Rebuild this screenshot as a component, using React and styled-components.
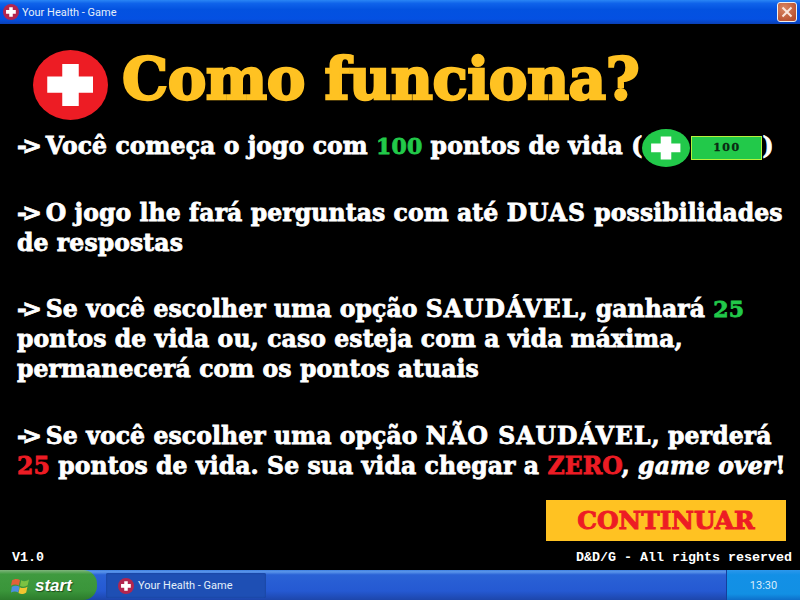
import React from 'react'
import styled, { createGlobalStyle } from 'styled-components'

const GlobalStyle = createGlobalStyle`
    html, body {
        margin: 0;
        padding: 0;
        background: #000;
    }
`

const Cross = ({ width, height, bg }) => (
    <svg width={width} height={height} viewBox="0 0 100 100" preserveAspectRatio="none" style={{ display: 'block', flexShrink: 0 }}>
        <ellipse cx="50" cy="50" rx="50" ry="50" fill={bg} />
        <path d="M39 20h22v18h19v23H61v19H39V61H19V38h20z" fill="#fff" />
    </svg>
)

const XpFlag = () => (
    <svg width="20" height="19" viewBox="0 0 20 19">
        <path d="M1 4.500C3.500 2.500 6.500 2.500 9 4l-1.200 5.600C5.300 8.200 2.700 8.200 0 9.800z" fill="#e2603a" />
        <path d="M10.200 4.200C12.500 5.700 15 5.600 18 3.500l-1.300 5.800c-2.700 1.800-5.300 1.800-7.700 .5z" fill="#7cc242" />
        <path d="M.8 10.800C3.500 9.300 6.200 9.300 8.500 10.800L7.300 16.500C5 15 2.500 15 0 16.600z" fill="#4c8fe0" />
        <path d="M8.800 11.200c2.400 1.300 5 1.300 7.700-.5L15.200 16.500c-2.800 1.900-5.400 1.900-7.700.5z" fill="#f2c530" />
    </svg>
)

const App = () => (
    <Desktop>
        <GlobalStyle />
        <TitleBar>
            <Cross width={16} height={16} bg="#b3264f" />
            <TitleText>Your Health - Game</TitleText>
            <CloseButton>
                <svg width="12" height="12" viewBox="0 0 12 12">
                    <path d="M1.500 1.500l9 9M10.500 1.500l-9 9" stroke="#fbe6dc" strokeWidth="2" />
                </svg>
            </CloseButton>
        </TitleBar>

        <Game>
            <Header>
                <Cross width={75} height={70} bg="#ed1c24" />
                <Heading>Como funciona?</Heading>
            </Header>

            <Rules>
                <Line><Arrow>-&gt;</Arrow> Você começa o jogo com <Good>100</Good> pontos de vida (<Meter>
                    <Cross width={48} height={38} bg="#22c94a" />
                    <MeterBar>100</MeterBar>
                </Meter>)</Line>
            </Rules>
            <Rules>
                <Line><Arrow>-&gt;</Arrow> O jogo lhe fará perguntas com até <Caps>DUAS</Caps> possibilidades</Line>
                <Line>de respostas</Line>
            </Rules>
            <Rules>
                <Line><Arrow>-&gt;</Arrow> Se você escolher uma opção <Caps>SAUDÁVEL</Caps>, ganhará <Good>25</Good></Line>
                <Line>pontos de vida ou, caso esteja com a vida máxima,</Line>
                <Line>permanecerá com os pontos atuais</Line>
            </Rules>
            <Rules $last>
                <Line><Arrow>-&gt;</Arrow> Se você escolher uma opção <Caps>NÃO SAUDÁVEL</Caps>, perderá</Line>
                <Line><Bad>25</Bad> pontos de vida. Se sua vida chegar a <Bad>ZERO</Bad>, <em>game over</em>!</Line>
            </Rules>

            <ContinueButton>CONTINUAR</ContinueButton>

            <Footer>
                <span>V1.0</span>
                <span>D&amp;D/G - All rights reserved</span>
            </Footer>
        </Game>

        <Taskbar>
            <StartButton>
                <XpFlag />
                <span>start</span>
            </StartButton>
            <TaskButton>
                <Cross width={16} height={16} bg="#b3264f" />
                <span>Your Health - Game</span>
            </TaskButton>
            <Tray>13:30</Tray>
        </Taskbar>
    </Desktop>
)

const Desktop = styled.div`
    width: 800px;
    height: 600px;
    overflow: hidden;
    display: flex;
    flex-direction: column;
    background: #000;
`

const TitleBar = styled.div`
    height: 24px;
    flex-shrink: 0;
    box-sizing: border-box;
    display: flex;
    align-items: center;
    gap: 3px;
    padding: 0 3px;
    background: linear-gradient(180deg, #2a86f5 0%, #0f63ea 14%, #0352e0 40%, #0450e2 80%, #0a3fb4 100%);
`

const TitleText = styled.span`
    flex: 1;
    color: #e4effa;
    font: 11px/1 Roboto, sans-serif;
`

const CloseButton = styled.div`
    width: 20px;
    height: 20px;
    box-sizing: border-box;
    border: 1px solid #f0f0f0;
    border-radius: 3px;
    display: grid;
    place-items: center;
    background: radial-gradient(circle at 35% 30%, #d98663, #b8502f 80%);
`

const Game = styled.main`
    flex: 1;
    min-height: 0;
    display: flex;
    flex-direction: column;
    background: #000;
    color: #fff;
    font-family: "DejaVu Serif", serif;
    font-weight: bold;
`

const Header = styled.header`
    display: flex;
    align-items: center;
    gap: 14px;
    height: 70px;
    margin: 26px 0 11px 33px;
`

const Heading = styled.h1`
    margin: -12px 0 0;
    color: #ffc222;
    font-size: 58px;
    line-height: 1;
    letter-spacing: -.5px;
    -webkit-text-stroke: 2.4px #ffc222;
    white-space: nowrap;
`

const Rules = styled.div`
    margin: 0 0 ${props => props.$last ? '19px' : '36.5px'} 17px;
    font-size: 23.5px;
    letter-spacing: .1px;
    -webkit-text-stroke: .8px currentColor;
`

const Line = styled.div`
    height: 30px;
    line-height: 30px;
    white-space: nowrap;
`

const Arrow = styled.span`
    letter-spacing: -4.5px;
`

const Caps = styled.span`
    letter-spacing: 1px;
`

const Good = styled.span`
    color: #22c94a;
    font-size: 22px;
`

const Bad = styled.span`
    color: #ed1c24;
`

const Meter = styled.span`
    display: inline-flex;
    align-items: center;
    gap: 1px;
    height: 38px;
    margin: -8px 0;
    vertical-align: middle;
`

const MeterBar = styled.span`
    width: 71px;
    height: 24px;
    box-sizing: border-box;
    border: 1px solid #b6f23c;
    background: #22c94a;
    color: #0a2a12;
    font-size: 11px;
    letter-spacing: 1.5px;
    line-height: 22px;
    text-align: center;
    -webkit-text-stroke: .3px #0a2a12;
`

const ContinueButton = styled.div`
    align-self: flex-end;
    width: 240px;
    height: 41px;
    margin-right: 14px;
    background: #ffc222;
    color: #ed1c24;
    font-size: 24.8px;
    line-height: 41px;
    text-align: center;
    -webkit-text-stroke: 1px #ed1c24;
`

const Footer = styled.footer`
    display: flex;
    justify-content: space-between;
    padding: 9px 8px 0 12px;
    font: bold 13.33px/16px "Liberation Mono", monospace;
`

const Taskbar = styled.div`
    height: 30px;
    flex-shrink: 0;
    display: flex;
    align-items: stretch;
    background: linear-gradient(180deg, #3f7fe0 0%, #5b96ea 6%, #2a62d6 16%, #2559d2 70%, #1d46ab 100%);
`

const StartButton = styled.div`
    width: 97px;
    box-sizing: border-box;
    display: flex;
    align-items: center;
    gap: 4px;
    padding-left: 11px;
    border-radius: 0 14px 14px 0;
    background: linear-gradient(180deg, #7fb57c 0%, #3f9a3f 14%, #3a953a 70%, #2c7b2c 100%);
    color: #fff;
    font: italic bold 17px/1 "Liberation Sans", sans-serif;
    text-shadow: 1px 1px 1px #1c4d1c;
`

const TaskButton = styled.div`
    width: 160px;
    margin: 3px 0 2px 9px;
    box-sizing: border-box;
    display: flex;
    align-items: center;
    gap: 4px;
    padding-left: 12px;
    border-radius: 2px;
    background: #1e4fb4;
    box-shadow: inset 0 0 2px #163c8d;
    color: #e4effa;
    font: 11px/1 Roboto, sans-serif;
`

const Tray = styled.div`
    width: 74px;
    margin-left: auto;
    display: grid;
    place-items: center;
    border-left: 1px solid #143f9c;
    box-sizing: border-box;
    background: linear-gradient(180deg, #2c97ec 0%, #1390e6 16%, #1290e4 80%, #0d6fca 100%);
    color: #d7ecfa;
    font: 11px/1 Roboto, sans-serif;
`

export default App
